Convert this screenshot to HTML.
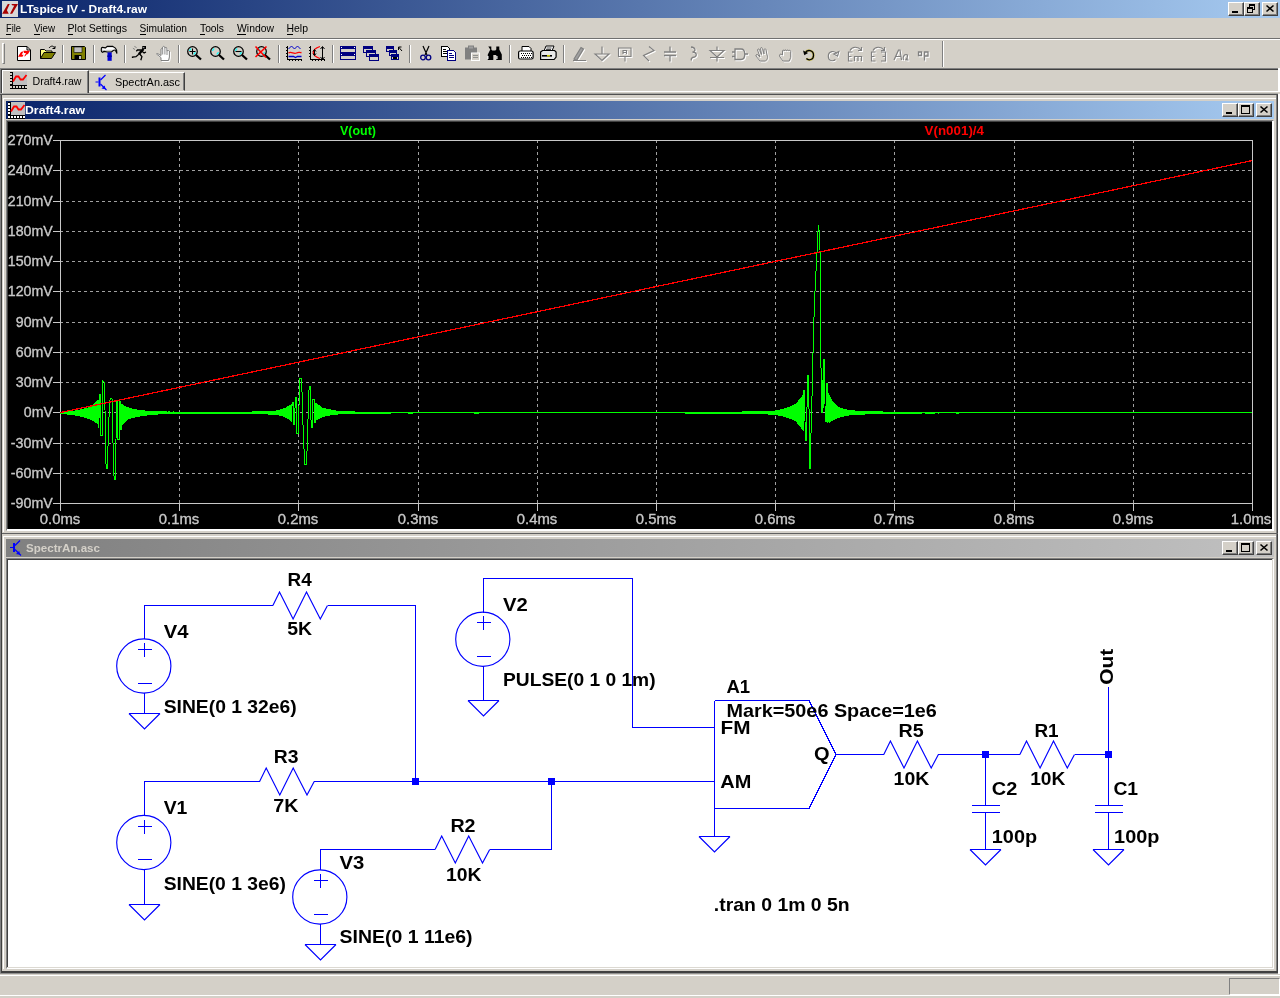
<!DOCTYPE html>
<html><head><meta charset="utf-8"><title>LTspice IV - Draft4.raw</title>
<style>
html,body{margin:0;padding:0}
body{width:1280px;height:998px;background:#d4d0c8;position:relative;overflow:hidden;font-family:"Liberation Sans",sans-serif;font-size:11px}
div{position:absolute;box-sizing:border-box}
svg{position:absolute;left:0;top:0;font-family:"Liberation Sans",sans-serif;will-change:transform}
.grad{background:linear-gradient(to right,#0a246a,#a6caf0)}
.gradi{background:linear-gradient(to right,#808080,#c0c0c0)}
.btn{width:16px;height:14px;background:#d4d0c8;border:1px solid;border-color:#fff #404040 #404040 #fff;box-shadow:inset -1px -1px 0 #808080}
.sep{width:2px;height:18px;top:45px;border-left:1px solid #808080;border-right:1px solid #fff}
.hl{height:1px;left:0;width:1280px}
</style></head><body>
<div class="grad" id="titlebar" style="left:0;top:0;width:1280px;height:18px"></div>
<div class="btn" style="left:1228px;top:2px"></div>
<div class="btn" style="left:1244px;top:2px"></div>
<div class="btn" style="left:1262px;top:2px"></div>
<div class="hl" style="top:38px;background:#707070"></div>
<div class="hl" style="top:39px;background:#fff"></div>
<div style="left:2px;top:43px;width:3px;height:21px;border:1px solid;border-color:#fff #808080 #808080 #fff"></div>
<div class="sep" style="left:62px"></div>
<div class="sep" style="left:93px"></div>
<div class="sep" style="left:124px"></div>
<div class="sep" style="left:178px"></div>
<div class="sep" style="left:278px"></div>
<div class="sep" style="left:332px"></div>
<div class="sep" style="left:409px"></div>
<div class="sep" style="left:509px"></div>
<div class="sep" style="left:563px"></div>
<div style="left:942px;top:41px;width:2px;height:26px;border-left:1px solid #808080;border-right:1px solid #fff"></div>
<div class="hl" style="top:68px;background:#808080;width:1278px"></div>
<div class="hl" style="top:69px;background:#404040;width:1277px;left:1px"></div>
<div style="left:0;top:68px;width:1px;height:26px;background:#808080"></div>
<div style="left:1px;top:69px;width:1px;height:25px;background:#404040"></div>
<div class="hl" style="top:91px;background:#fff;left:2px;width:1278px"></div>
<div style="left:1278px;top:68px;width:2px;height:24px;background:#fff"></div>
<div id="tab1" style="left:2px;top:70px;width:87px;height:24px;background:#d4d0c8;border:1px solid;border-color:#fff #404040 #d4d0c8 #fff;border-bottom:none;box-shadow:inset -1px 0 0 #808080"></div>
<div id="tab2" style="left:89px;top:72px;width:96px;height:19px;border:1px solid;border-color:#fff #404040 #d4d0c8 #d4d0c8;box-shadow:inset -1px 0 0 #808080"></div>
<div style="left:0px;top:94px;width:1px;height:880px;background:#808080"></div>
<div style="left:1px;top:94px;width:1px;height:880px;background:#404040"></div>
<div style="left:1278px;top:94px;width:1px;height:880px;background:#fff"></div>
<div style="left:1279px;top:94px;width:1px;height:880px;background:#fff"></div>
<div style="left:0px;top:93px;width:1278px;height:1px;background:#a8a8a4"></div>
<div style="left:0px;top:94px;width:1278px;height:1px;background:#505050"></div>
<div id="win1" style="left:2px;top:95px;width:1276px;height:439px;background:#d4d0c8"></div>
<div style="left:3px;top:98px;width:1273px;height:1px;background:#fff"></div>
<div style="left:3px;top:98px;width:1px;height:434px;background:#fff"></div>
<div style="left:1276px;top:95px;width:1px;height:439px;background:#808080"></div>
<div style="left:1277px;top:95px;width:1px;height:439px;background:#404040"></div>
<div style="left:2px;top:533px;width:1276px;height:1px;background:#606060"></div>
<div class="grad" id="cap1" style="left:6px;top:101px;width:1268px;height:18px"></div>
<div class="btn" style="left:1222px;top:103px"></div>
<div class="btn" style="left:1238px;top:103px"></div>
<div class="btn" style="left:1256px;top:103px"></div>
<div id="plot" style="left:6px;top:120px;width:1268px;height:411px;background:#fff;border:1px solid;border-color:#808080 #fff #fff #808080"></div>
<div style="left:7px;top:121px;width:1265px;height:408px;background:#000;border-left:1px solid #404040;border-top:1px solid #404040"></div>
<div id="win2" style="left:2px;top:534px;width:1276px;height:437px;background:#d4d0c8"></div>
<div style="left:3px;top:536px;width:1273px;height:1px;background:#fff"></div>
<div style="left:3px;top:536px;width:1px;height:433px;background:#fff"></div>
<div style="left:1276px;top:534px;width:1px;height:439px;background:#808080"></div>
<div style="left:1277px;top:534px;width:1px;height:439px;background:#404040"></div>
<div style="left:2px;top:971px;width:1276px;height:1px;background:#404040"></div>
<div style="left:2px;top:972px;width:1276px;height:1px;background:#404040"></div>
<div style="left:0px;top:973px;width:1278px;height:1px;background:#909090"></div>
<div class="gradi" id="cap2" style="left:6px;top:539px;width:1268px;height:18px"></div>
<div class="btn" style="left:1222px;top:541px"></div>
<div class="btn" style="left:1238px;top:541px"></div>
<div class="btn" style="left:1256px;top:541px"></div>
<div id="sch" style="left:6px;top:558px;width:1268px;height:411px;background:#dcd9d2;border:1px solid;border-color:#808080 #fff #fff #808080"></div>
<div style="left:7px;top:559px;width:1265px;height:408px;background:#fff;border-left:1px solid #404040;border-top:1px solid #404040"></div>
<div style="left:0px;top:975px;width:1280px;height:1px;background:#fff"></div>
<div style="left:0px;top:995px;width:1280px;height:1px;background:#fff"></div>
<div style="left:1229px;top:978px;width:51px;height:17px;border:1px solid;border-color:#808080 #fff #fff #808080"></div>
<svg id="ui" width="1280" height="998" viewBox="0 0 1280 998">
<g transform="translate(2,1)"><rect width="16" height="16" fill="#d8d8d8"/><path d="M5.8 2.900H7.700L4.900 9.300L6.750 12.700H0.200Z" fill="#a80000"/><path d="M9.250 2.900H16L10.200 12.700H8L12.300 4.600H10.600Z" fill="#a80000"/></g>
<text x="20.0" y="13.0" font-size="11" fill="#fff" font-weight="bold" textLength="127.0" lengthAdjust="spacingAndGlyphs">LTspice IV - Draft4.raw</text>
<text x="6.0" y="32.0" font-size="11" fill="#000" textLength="15.0" lengthAdjust="spacingAndGlyphs">File</text>
<text x="34.0" y="32.0" font-size="11" fill="#000" textLength="21.0" lengthAdjust="spacingAndGlyphs">View</text>
<text x="67.5" y="32.0" font-size="11" fill="#000" textLength="59.5" lengthAdjust="spacingAndGlyphs">Plot Settings</text>
<text x="139.5" y="32.0" font-size="11" fill="#000" textLength="47.5" lengthAdjust="spacingAndGlyphs">Simulation</text>
<text x="200.0" y="32.0" font-size="11" fill="#000" textLength="24.0" lengthAdjust="spacingAndGlyphs">Tools</text>
<text x="237.0" y="32.0" font-size="11" fill="#000" textLength="37.0" lengthAdjust="spacingAndGlyphs">Window</text>
<text x="286.5" y="32.0" font-size="11" fill="#000" textLength="21.5" lengthAdjust="spacingAndGlyphs">Help</text>
<rect x="6" y="34" width="5" height="1" fill="#000"/>
<rect x="34" y="34" width="6" height="1" fill="#000"/>
<rect x="68" y="34" width="5" height="1" fill="#000"/>
<rect x="140" y="34" width="6" height="1" fill="#000"/>
<rect x="200" y="34" width="5" height="1" fill="#000"/>
<rect x="237" y="34" width="9" height="1" fill="#000"/>
<rect x="287" y="34" width="6" height="1" fill="#000"/>
<rect x="1232" y="11" width="6" height="2" fill="#000"/>
<path d="M1249 4h6v6h-6z M1250 6v3h4v-3z" fill="#000" fill-rule="evenodd"/><path d="M1247 7h6v6h-6z M1248 9v3h4v-3z" fill="#000" fill-rule="evenodd"/><rect x="1248" y="9" width="4" height="3" fill="#d4d0c8"/>
<path d="M1266.5 5.5l7 6M1273.5 5.5l-7 6" stroke="#000" stroke-width="1.6" fill="none"/>
<rect x="1226" y="112" width="6" height="2" fill="#000"/>
<path d="M1241 105h9v9h-9z M1242 107v6h7v-6z" fill="#000" fill-rule="evenodd"/>
<path d="M1260.5 106.5l7 6M1267.5 106.5l-7 6" stroke="#000" stroke-width="1.6" fill="none"/>
<rect x="1226" y="550" width="6" height="2" fill="#000"/>
<path d="M1241 543h9v9h-9z M1242 545v6h7v-6z" fill="#000" fill-rule="evenodd"/>
<path d="M1260.5 544.5l7 6M1267.5 544.5l-7 6" stroke="#000" stroke-width="1.6" fill="none"/>
<g transform="translate(10,72)" shape-rendering="crispEdges"><rect x="0" y="0" width="3" height="17" fill="#000"/><rect x="0" y="13" width="17" height="4" fill="#000"/><rect x="3" y="0" width="14" height="13" fill="#c0c0c0"/><rect x="0" y="1" width="2" height="2" fill="#d4d0c8"/><rect x="0" y="4" width="2" height="2" fill="#d4d0c8"/><rect x="0" y="7" width="2" height="2" fill="#d4d0c8"/><rect x="0" y="10" width="2" height="2" fill="#d4d0c8"/><rect x="0" y="14" width="2" height="2" fill="#d4d0c8"/><rect x="3" y="14" width="2" height="2" fill="#d4d0c8"/><rect x="6" y="14" width="2" height="2" fill="#d4d0c8"/><rect x="9" y="14" width="2" height="2" fill="#d4d0c8"/><rect x="12" y="14" width="2" height="2" fill="#d4d0c8"/><rect x="15" y="14" width="2" height="2" fill="#d4d0c8"/></g><path d="M13 81.5L16 76.5H18.5L20.5 79.5H23L26.5 75" stroke="#f00" stroke-width="1.8" fill="none"/>
<text x="32.5" y="85.0" font-size="11" fill="#000" textLength="49.0" lengthAdjust="spacingAndGlyphs">Draft4.raw</text>
<g transform="translate(95.5,74.5)" stroke="#00f" fill="none"><path d="M0 7.5h3" stroke-width="1"/><rect x="3" y="3" width="2" height="9" fill="#00f" stroke="none"/><path d="M5 5.5L10 .5M5 9.500L11 15.500" stroke-width="1.2"/><path d="M10 14.800l-4-.8 3.200-3z" fill="#00f" stroke="none"/></g>
<text x="115.0" y="86.0" font-size="11" fill="#000" textLength="65.0" lengthAdjust="spacingAndGlyphs">SpectrAn.asc</text>
<g transform="translate(8,102)" shape-rendering="crispEdges"><rect x="0" y="0" width="3" height="17" fill="#000"/><rect x="0" y="13" width="17" height="4" fill="#000"/><rect x="3" y="0" width="14" height="13" fill="#c0c0c0"/><rect x="0" y="1" width="2" height="2" fill="#fff"/><rect x="0" y="4" width="2" height="2" fill="#fff"/><rect x="0" y="7" width="2" height="2" fill="#fff"/><rect x="0" y="10" width="2" height="2" fill="#fff"/><rect x="0" y="14" width="2" height="2" fill="#fff"/><rect x="3" y="14" width="2" height="2" fill="#fff"/><rect x="6" y="14" width="2" height="2" fill="#fff"/><rect x="9" y="14" width="2" height="2" fill="#fff"/><rect x="12" y="14" width="2" height="2" fill="#fff"/><rect x="15" y="14" width="2" height="2" fill="#fff"/></g><path d="M11 111.5L14 106.5H16.5L18.5 109.5H21L24.5 105" stroke="#f00" stroke-width="1.8" fill="none"/>
<text x="25.0" y="114.0" font-size="11" fill="#fff" font-weight="bold" textLength="60.0" lengthAdjust="spacingAndGlyphs">Draft4.raw</text>
<g transform="translate(10,540)" stroke="#00f" fill="none"><path d="M0 7.5h3" stroke-width="1"/><rect x="3" y="3" width="2" height="9" fill="#00f" stroke="none"/><path d="M5 5.5L10 .5M5 9.500L11 15.500" stroke-width="1.2"/><path d="M10 14.800l-4-.8 3.200-3z" fill="#00f" stroke="none"/></g>
<text x="26.0" y="552.0" font-size="11" fill="#d4d0c8" font-weight="bold" textLength="74.0" lengthAdjust="spacingAndGlyphs">SpectrAn.asc</text>
<g transform="translate(17,45)"><path d="M0.5 1.5h9.5l3.5 3.5v10.500h-13z" fill="#fff" stroke="#000"/><path d="M10 1.5v3.5h3.500" fill="none" stroke="#000"/><path d="M1 11.800L4 7L6.500 6.200L4.700 9.700H6.500L5.500 11.800Z" fill="#f00"/><path d="M6.500 5.800H13L11 9L9.200 9.700L8.500 11L7.200 11.500L9 8H7Z" fill="#f00"/></g>
<g transform="translate(40,45)"><path d="M0.5 13.5v-9h4l1.5 1.5h6v2" fill="#ffff80" stroke="#000"/><path d="M0.5 13.5l3.5-6h11.5l-4 6z" fill="#808000" stroke="#000"/><path d="M9 3c2-2.5 4.5-2.5 5.5 0m0.500-2v2.5h-2.5" fill="none" stroke="#000"/></g>
<g transform="translate(71,45)"><path d="M0.5 1.5h13l1 1v12h-14z" fill="#808000" stroke="#000"/><rect x="3" y="2" width="8" height="5.5" fill="#c0c0c0" stroke="#000" stroke-width=".6"/><rect x="3.5" y="10" width="7" height="4.5" fill="#000"/><rect x="8" y="11" width="2" height="3" fill="#c0c0c0"/></g>
<g transform="translate(101,45)"><path d="M0.300 3.900Q.4 2.300 1.400 2.300L4.400 2.900L6.250 1.400H11.900Q15 2.500 15.600 5.100L15.900 8.600L15 6.400Q14 5 13.100 4.800L10.500 7H6.250L3.100 6.400L1.400 7.300Q.3 7 .3 5.750Z" fill="#c8c8c8" stroke="#000" stroke-width="1.1"/><path d="M1.300 3.800L4.400 4L6.500 2.600H11.500Q13.300 3.300 14 4.600L10 4.800H6L3.500 5L1.300 4.800Z" fill="#fff"/><rect x="6.500" y="7.400" width="4.200" height="8.400" fill="#0000d8"/><rect x="6.200" y="10.500" width="4.800" height="1.300" fill="#0000a0"/></g>
<g transform="translate(132,45)"><rect x="10.300" y="1" width="3.700" height="3" fill="#000"/><rect x="11.300" y="2.200" width="1" height="1" fill="#fff"/><path d="M11.500 3.900L6.800 9.300" stroke="#000" stroke-width="2.400" fill="none"/><path d="M9.500 5H5.500L4.300 6.300M10 6.300L12.100 7.900L14 7M6.800 9.300L4 11.700L.5 12V13M7.750 9L9.900 11.700L8.800 15.200" stroke="#000" stroke-width="1.300" fill="none"/><path d="M.9 3.250L3 4.500M2.400 1.400L4.600 2.600" stroke="#707070" stroke-width=".8"/></g>
<g transform="translate(156,45)"><path d="M5 15.500V12.600L.8 9.300Q.3 8.300 1.500 8.500L5 10.500V4Q5.750 2.800 6.600 4V2Q7.800 .6 8.800 2V3Q9.900 1.600 10.900 3V6Q12.400 4.600 13.400 6V12L12.500 15.500Z" transform="translate(1,1)" stroke="#fff" stroke-width="1" fill="none"/><path d="M5 15.500V12.600L.8 9.300Q.3 8.300 1.500 8.500L5 10.500V4Q5.750 2.800 6.600 4V2Q7.800 .6 8.800 2V3Q9.900 1.600 10.900 3V6Q12.400 4.600 13.400 6V12L12.500 15.500Z" stroke="#808080" stroke-width="1" fill="#fff"/><path d="M6.700 4V9.500M8.900 3V9.500M11 6V10" stroke="#808080" stroke-width=".9" fill="none"/></g>
<g transform="translate(187,45)"><circle cx="5.500" cy="6.500" r="4.800" fill="none" stroke="#000" stroke-width="1.250"/><path d="M2.600 6a3.200 3.200 0 0 1 1.600-2.400M8.400 7.200a3.200 3.200 0 0 1-1.700 2.200" stroke="#0ff" stroke-width="1.200" fill="none"/><path d="M9 10L14 14.500" stroke="#000" stroke-width="2.300"/><path d="M2.500 6.500h6M5.500 3.500v6" stroke="#000" stroke-width="1.100"/></g>
<g transform="translate(210,45)"><circle cx="5.500" cy="6.500" r="4.800" fill="none" stroke="#000" stroke-width="1.250"/><path d="M2.600 6a3.200 3.200 0 0 1 1.600-2.400M8.400 7.200a3.200 3.200 0 0 1-1.700 2.200" stroke="#0ff" stroke-width="1.200" fill="none"/><path d="M9 10L14 14.500" stroke="#000" stroke-width="2.300"/></g>
<g transform="translate(233,45)"><circle cx="5.500" cy="6.500" r="4.800" fill="none" stroke="#000" stroke-width="1.250"/><path d="M2.600 6a3.200 3.200 0 0 1 1.600-2.400M8.400 7.200a3.200 3.200 0 0 1-1.700 2.200" stroke="#0ff" stroke-width="1.200" fill="none"/><path d="M9 10L14 14.500" stroke="#000" stroke-width="2.300"/><path d="M2.500 6.500h6" stroke="#000" stroke-width="1.100"/></g>
<g transform="translate(256,45)"><circle cx="5.500" cy="6.500" r="4.800" fill="none" stroke="#000" stroke-width="1.250"/><path d="M2.600 6a3.200 3.200 0 0 1 1.600-2.400M8.400 7.200a3.200 3.200 0 0 1-1.700 2.200" stroke="#0ff" stroke-width="1.200" fill="none"/><path d="M9 10L14 14.500" stroke="#000" stroke-width="2.300"/><path d="M-.5 1.500l10.500 11M10.500 1.500l-11 10.500" stroke="#f00" stroke-width="1.600"/></g>
<g transform="translate(286,45)"><path d="M1.5 1v13.500h14.500" stroke="#000" fill="none" shape-rendering="crispEdges"/><path d="M0 2.5h1M0 5.5h1M0 8.5h1M0 11.5h1M3 15.5h13" stroke="#000" fill="none" stroke-dasharray="1 2" shape-rendering="crispEdges"/><path d="M2.5 4l3-3 3 3 3-3 3 3" stroke="#00c" fill="none"/><path d="M2.5 8c3-2 5 1.5 8 0s3 0 5-.5" stroke="#f00" fill="none" stroke-width="1.3"/><path d="M2.5 11.5h5l2 1 2-1h4" stroke="#00c" fill="none" stroke-width="1.3"/></g>
<g transform="translate(309,45)"><path d="M1.5 1v13.500h14.500" stroke="#000" fill="none" shape-rendering="crispEdges"/><path d="M0 2.5h1M0 5.5h1M0 8.5h1M0 11.5h1M3 15.5h13" stroke="#000" fill="none" stroke-dasharray="1 2" shape-rendering="crispEdges"/><path d="M11 1.5c-9 3-9 9 0 12" stroke="#f00" fill="none" stroke-width="1.2"/><path d="M13.5 2v12M11.5 4l2-2.500 2 2.500M11.5 12l2 2.500 2-2.500M5.5 5v5M4 6.5l1.5-2 1.5 2M4 8.5l1.5 2 1.5-2" stroke="#000" fill="none"/></g>
<g transform="translate(340,45)"><g shape-rendering="crispEdges"><rect x=".5" y="1.5" width="15" height="6" fill="#d4d0c8" stroke="#000080"/><rect x="0" y="1" width="16" height="3" fill="#000080"/><rect x=".5" y="8.5" width="15" height="6" fill="#d4d0c8" stroke="#000080"/><rect x="0" y="8" width="16" height="3" fill="#000080"/><rect x="1" y="2" width="1" height="1" fill="#fff"/><rect x="14" y="2" width="1" height="1" fill="#fff"/><rect x="1" y="9" width="1" height="1" fill="#fff"/><rect x="14" y="9" width="1" height="1" fill="#fff"/></g></g>
<g transform="translate(363,45)"><g shape-rendering="crispEdges"><rect x="0.5" y="1.5" width="9" height="6" fill="#d4d0c8" stroke="#000080"/><rect x="0" y="1" width="10" height="3" fill="#000080"/><rect x="3.5" y="5.5" width="9" height="6" fill="#d4d0c8" stroke="#000080"/><rect x="3" y="5" width="10" height="3" fill="#000080"/><rect x="6.5" y="9.5" width="9" height="6" fill="#d4d0c8" stroke="#000080"/><rect x="6" y="9" width="10" height="3" fill="#000080"/></g></g>
<g transform="translate(386,45)"><g shape-rendering="crispEdges"><rect x="0.5" y="1.5" width="7" height="5" fill="#d4d0c8" stroke="#000080"/><rect x="0" y="1" width="8" height="3" fill="#000080"/><rect x="3.5" y="5.5" width="7" height="5" fill="#d4d0c8" stroke="#000080"/><rect x="3" y="5" width="8" height="3" fill="#000080"/><rect x="5.5" y="9.5" width="7" height="5" fill="#d4d0c8" stroke="#000080"/><rect x="5" y="9" width="8" height="3" fill="#000080"/><rect x="7" y="12" width="4" height="2" fill="#000"/></g><path d="M16 6l-3.500-4M12.5 5v-3h3" stroke="#000" fill="none"/></g>
<g transform="translate(420,45)"><path d="M3 1l4 9M9 1l-4 9" stroke="#000" stroke-width="1.2"/><circle cx="3" cy="12.5" r="2.3" fill="none" stroke="#000080" stroke-width="1.3"/><circle cx="8.5" cy="12.5" r="2.3" fill="none" stroke="#000080" stroke-width="1.3"/></g>
<g transform="translate(441,45)"><g shape-rendering="crispEdges"><path d="M.5 1.5h6l2 2v8h-8z" fill="#fff" stroke="#000"/><path d="M2 4.5h3M2 6.5h5M2 8.5h5" stroke="#000"/><path d="M6.5 5.5h6l2 2v7.500h-8z" fill="#fff" stroke="#000080"/><path d="M8 8.5h3M8 10.5h5M8 12.5h5" stroke="#000080"/></g></g>
<g transform="translate(464,45)"><rect x="1" y="2.5" width="12" height="12" fill="#808080"/><rect x="4.5" y="1" width="5" height="3" fill="#a0a0a0" stroke="#808080"/><rect x="7.5" y="8" width="8" height="7.5" fill="#d4d0c8" stroke="#fff"/><path d="M9 10.5h5M9 12.5h5" stroke="#808080" stroke-width=".8"/></g>
<g transform="translate(485.8,45)"><path d="M2.5 1.5h3v3l1 1h3l1-1v-3h3v3l2.500 5v5.500h-5.500v-5h-3v5h-5.500v-5.500l2.500-5z" fill="#000"/><rect x="1.5" y="11" width="1.2" height="3" fill="#fff"/><rect x="10.5" y="11" width="1.2" height="3" fill="#fff"/></g>
<g transform="translate(518,45)"><path d="M4 6v-4.500h7l2 2v2.500" fill="#fff" stroke="#000"/><rect x=".6" y="6" width="14.5" height="8" rx="1.5" fill="#fff" stroke="#000" stroke-width="1.2"/><path d="M2.5 8.5h11M3.5 10.5h10M2.5 12.5h11" stroke="#000" stroke-dasharray="1 1" shape-rendering="crispEdges"/></g>
<g transform="translate(540,45)"><path d="M4 6l2-5h8l-2 5" fill="#fff" stroke="#000"/><path d="M6.5 3h5M6 4.5h5" stroke="#000" stroke-width=".7"/><path d="M.6 7l2-1.500h12l1.5 1.500v5l-2 2.500h-13.500z" fill="#e8e8e8" stroke="#000" stroke-width="1.2"/><rect x="2" y="10" width="10" height="1.6" fill="#000"/><rect x="7" y="10.2" width="3" height="1.2" fill="#ff0"/></g>
<g transform="translate(572,46)"><path d="M1 14.5h13M2 13l7-11.500 2.500 1.500-7 11.500z" transform="translate(1,1)" stroke="#fff" stroke-width="1.2" fill="none"/><path d="M1 14.5h13M2 13l7-11.500 2.500 1.500-7 11.500z" stroke="#808080" stroke-width="1.2" fill="#a0a0a0"/></g>
<g transform="translate(594,46)"><path d="M8 .5v7.500M1 8h14l-7 6.500z" transform="translate(1,1)" stroke="#fff" stroke-width="1.2" fill="none"/><path d="M8 .5v7.500M1 8h14l-7 6.500z" stroke="#808080" stroke-width="1.2" fill="none"/></g>
<g transform="translate(617,46)"><path d="M1.5 2h12.500v8.500h-12.500zM8 10.500v5M6 8v-3.500h3.500v3.500M6 6.500h3.500" transform="translate(1,1)" stroke="#fff" stroke-width="1.1" fill="none"/><path d="M1.5 2h12.500v8.500h-12.500zM8 10.500v5M6 8v-3.500h3.500v3.500M6 6.500h3.500" stroke="#808080" stroke-width="1.1" fill="none"/></g>
<g transform="translate(641,46)"><path d="M8 .5l5 4-10.500 5 5.500 5.500" transform="translate(1,1)" stroke="#fff" stroke-width="1.2" fill="none"/><path d="M8 .5l5 4-10.500 5 5.500 5.500" stroke="#808080" stroke-width="1.2" fill="none"/></g>
<g transform="translate(663,46)"><path d="M7 .5v5.500M1 6h12M1 9.500h12M7 9.500v6" transform="translate(1,1)" stroke="#fff" stroke-width="1.3" fill="none"/><path d="M7 .5v5.500M1 6h12M1 9.500h12M7 9.500v6" stroke="#808080" stroke-width="1.3" fill="none"/></g>
<g transform="translate(687,46)"><path d="M4 1c5 .5 5 4.500 1.500 5c5 .5 5 5 0 5.500c-1.500 1-1.500 2-1 3" transform="translate(1,1)" stroke="#fff" stroke-width="1.3" fill="none"/><path d="M4 1c5 .5 5 4.500 1.500 5c5 .5 5 5 0 5.500c-1.500 1-1.500 2-1 3" stroke="#808080" stroke-width="1.3" fill="none"/></g>
<g transform="translate(709,46)"><path d="M8 .5v4M1 4.500h14l-7 6.500zM1 11.500h14M8 11.500v4" transform="translate(1,1)" stroke="#fff" stroke-width="1.2" fill="none"/><path d="M8 .5v4M1 4.500h14l-7 6.500zM1 11.500h14M8 11.500v4" stroke="#808080" stroke-width="1.2" fill="none"/></g>
<g transform="translate(732,46)"><path d="M0 6h3M0 10.500h3M3 3h6c5 0 5 10.500 0 10.500h-6zM13 8h3" transform="translate(1,1)" stroke="#fff" stroke-width="1.3" fill="none"/><path d="M0 6h3M0 10.500h3M3 3h6c5 0 5 10.500 0 10.500h-6zM13 8h3" stroke="#808080" stroke-width="1.3" fill="none"/></g>
<g transform="translate(755,46)"><path d="M5 15l-4-5c-.5-1.500 1-2 2-1l2 2-2.500-7c0-1 1.500-1.500 2-.5l2 5-1-6c0-1 1.500-1.500 2 0l1.500 5.500 0-4.500c.5-1 1.500-1 2 0l1 5.500c1.500 2.500 0 4.500-1.500 6z" transform="translate(1,1)" stroke="#fff" stroke-width="1" fill="none"/><path d="M5 15l-4-5c-.5-1.500 1-2 2-1l2 2-2.500-7c0-1 1.500-1.500 2-.5l2 5-1-6c0-1 1.500-1.500 2 0l1.500 5.500 0-4.500c.5-1 1.500-1 2 0l1 5.500c1.500 2.500 0 4.500-1.500 6z" stroke="#808080" stroke-width="1" fill="none"/></g>
<g transform="translate(779,46)"><path d="M4 15l-3-4c-1-1.500-.5-3 1-3l1.500 1v-4c0-1.200 1.600-1.200 1.800 0 0-1.500 2-1.500 2.200 0 0-1.300 2-1.300 2.200 0 .2-1 1.800-1 2 .3v6l-1.500 3.700z" transform="translate(1,1)" stroke="#fff" stroke-width="1" fill="none"/><path d="M4 15l-3-4c-1-1.500-.5-3 1-3l1.500 1v-4c0-1.200 1.600-1.200 1.800 0 0-1.500 2-1.500 2.200 0 0-1.300 2-1.300 2.200 0 .2-1 1.800-1 2 .3v6l-1.500 3.700z" stroke="#808080" stroke-width="1" fill="none"/></g>
<g transform="translate(801,45)"><g transform="translate(1.200,2.600) scale(.84)"><path d="M3.500 6.500c2.500-5 10-3.500 10 2.500s-6 6.500-8.500 4" stroke="#c8b400" stroke-width="2.800" fill="none" opacity=".5"/><path d="M3.500 6.500c2.500-5 10-3.500 10 2.500s-6 6.500-8.500 4" stroke="#000" stroke-width="1.500" fill="none"/><path d="M1 3.500l1.500 5.500 4.500-2.500z" fill="#000"/></g></g>
<g transform="translate(825,46)"><g transform="translate(1.200,2.600) scale(.84)"><path d="M12.500 6.500c-2.500-5-10-3.500-10 2.500s6 6.500 8.500 4M15 3.500l-1.500 5.500-4.500-2.500z" transform="translate(1,1)" stroke="#fff" stroke-width="1.4" fill="none"/><path d="M12.500 6.500c-2.500-5-10-3.500-10 2.500s6 6.500 8.500 4M15 3.500l-1.500 5.500-4.500-2.500z" stroke="#808080" stroke-width="1.4" fill="none"/></g></g>
<g transform="translate(847,46)"><path d="M5.500 6h-4v9h4M1.500 10.500h3M7.500 15v-4.500h7v4.500M11 10.500v4.500M3 4.500c2-4 8-4.500 11-.5M14.500 1v3.500h-3.500" transform="translate(1,1)" stroke="#fff" stroke-width="1.2" fill="none"/><path d="M5.500 6h-4v9h4M1.500 10.500h3M7.500 15v-4.500h7v4.500M11 10.500v4.500M3 4.500c2-4 8-4.500 11-.5M14.500 1v3.500h-3.500" stroke="#808080" stroke-width="1.2" fill="none"/></g>
<g transform="translate(870,46)"><path d="M5.500 6h-4v9h4M1.500 10.500h3M11 6h4.500v9h-4.500M15.500 10.500h-3M3 4.500c2-4 8-4.500 11-.5M14.500 1v3.500h-3.500" transform="translate(1,1)" stroke="#fff" stroke-width="1.2" fill="none"/><path d="M5.500 6h-4v9h4M1.500 10.500h3M11 6h4.500v9h-4.500M15.500 10.500h-3M3 4.500c2-4 8-4.500 11-.5M14.500 1v3.500h-3.500" stroke="#808080" stroke-width="1.2" fill="none"/></g>
<g transform="translate(893,46)"><path d="M1 14l4.500-10h1.500l1.500 10M3 10.500h5M10.500 14c-1-2 0-5.500 2.500-5.500s1.500 4-.5 5.500M14.500 8.500l-.5 5.500h1.500" transform="translate(1,1)" stroke="#fff" stroke-width="1.2" fill="none"/><path d="M1 14l4.500-10h1.500l1.500 10M3 10.500h5M10.500 14c-1-2 0-5.500 2.500-5.500s1.500 4-.5 5.500M14.500 8.500l-.5 5.500h1.500" stroke="#808080" stroke-width="1.2" fill="none"/></g>
<g transform="translate(917,46)"><path d="M1.500 6h3v3.500h-3zM7.500 14.500v-8.500h3.500v4h-3.500" transform="translate(1,1)" stroke="#fff" stroke-width="1.3" fill="none"/><path d="M1.500 6h3v3.500h-3zM7.500 14.500v-8.500h3.500v4h-3.500" stroke="#808080" stroke-width="1.3" fill="none"/></g>
</svg>
<svg id="plotsvg" width="1280" height="998" viewBox="0 0 1280 998">
<g shape-rendering="crispEdges" fill="none">
<path d="M60 170.5H1252M60 201.5H1252M60 231.5H1252M60 261.5H1252M60 291.5H1252M60 322.5H1252M60 352.5H1252M60 382.5H1252M60 412.5H1252M60 443.5H1252M60 473.5H1252" stroke="#a0a0a0" stroke-width="1" stroke-dasharray="3 3"/>
<path d="M179.5 140V503M298.5 140V503M418.5 140V503M537.5 140V503M656.5 140V503M775.5 140V503M894.5 140V503M1014.5 140V503M1133.5 140V503" stroke="#a0a0a0" stroke-width="1" stroke-dasharray="3 3"/>
<path d="M53 140.5H1252.5V511M53 503.5H1252M60.5 140V511M53 170.5H60M53 201.5H60M53 231.5H60M53 261.5H60M53 291.5H60M53 322.5H60M53 352.5H60M53 382.5H60M53 412.5H60M53 443.5H60M53 473.5H60M179.5 503V511M298.5 503V511M418.5 503V511M537.5 503V511M656.5 503V511M775.5 503V511M894.5 503V511M1014.5 503V511M1133.5 503V511" stroke="#c8c8c8" stroke-width="1"/>
</g>
<text x="7.8" y="145.0" font-size="14.3" fill="#c8c8c8" textLength="45.0" lengthAdjust="spacingAndGlyphs" stroke="#c8c8c8" stroke-width="0.35">270mV</text>
<text x="7.8" y="175.0" font-size="14.3" fill="#c8c8c8" textLength="45.0" lengthAdjust="spacingAndGlyphs" stroke="#c8c8c8" stroke-width="0.35">240mV</text>
<text x="7.8" y="206.0" font-size="14.3" fill="#c8c8c8" textLength="45.0" lengthAdjust="spacingAndGlyphs" stroke="#c8c8c8" stroke-width="0.35">210mV</text>
<text x="7.8" y="236.0" font-size="14.3" fill="#c8c8c8" textLength="45.0" lengthAdjust="spacingAndGlyphs" stroke="#c8c8c8" stroke-width="0.35">180mV</text>
<text x="7.8" y="266.0" font-size="14.3" fill="#c8c8c8" textLength="45.0" lengthAdjust="spacingAndGlyphs" stroke="#c8c8c8" stroke-width="0.35">150mV</text>
<text x="7.8" y="296.0" font-size="14.3" fill="#c8c8c8" textLength="45.0" lengthAdjust="spacingAndGlyphs" stroke="#c8c8c8" stroke-width="0.35">120mV</text>
<text x="15.8" y="327.0" font-size="14.3" fill="#c8c8c8" textLength="37.0" lengthAdjust="spacingAndGlyphs" stroke="#c8c8c8" stroke-width="0.35">90mV</text>
<text x="15.8" y="357.0" font-size="14.3" fill="#c8c8c8" textLength="37.0" lengthAdjust="spacingAndGlyphs" stroke="#c8c8c8" stroke-width="0.35">60mV</text>
<text x="15.8" y="387.0" font-size="14.3" fill="#c8c8c8" textLength="37.0" lengthAdjust="spacingAndGlyphs" stroke="#c8c8c8" stroke-width="0.35">30mV</text>
<text x="23.8" y="417.0" font-size="14.3" fill="#c8c8c8" textLength="29.0" lengthAdjust="spacingAndGlyphs" stroke="#c8c8c8" stroke-width="0.35">0mV</text>
<text x="10.8" y="448.0" font-size="14.3" fill="#c8c8c8" textLength="42.0" lengthAdjust="spacingAndGlyphs" stroke="#c8c8c8" stroke-width="0.35">-30mV</text>
<text x="10.8" y="478.0" font-size="14.3" fill="#c8c8c8" textLength="42.0" lengthAdjust="spacingAndGlyphs" stroke="#c8c8c8" stroke-width="0.35">-60mV</text>
<text x="10.8" y="508.0" font-size="14.3" fill="#c8c8c8" textLength="42.0" lengthAdjust="spacingAndGlyphs" stroke="#c8c8c8" stroke-width="0.35">-90mV</text>
<text x="39.8" y="524.0" font-size="14.3" fill="#c8c8c8" textLength="40.5" lengthAdjust="spacingAndGlyphs" stroke="#c8c8c8" stroke-width="0.35">0.0ms</text>
<text x="158.8" y="524.0" font-size="14.3" fill="#c8c8c8" textLength="40.5" lengthAdjust="spacingAndGlyphs" stroke="#c8c8c8" stroke-width="0.35">0.1ms</text>
<text x="277.8" y="524.0" font-size="14.3" fill="#c8c8c8" textLength="40.5" lengthAdjust="spacingAndGlyphs" stroke="#c8c8c8" stroke-width="0.35">0.2ms</text>
<text x="397.8" y="524.0" font-size="14.3" fill="#c8c8c8" textLength="40.5" lengthAdjust="spacingAndGlyphs" stroke="#c8c8c8" stroke-width="0.35">0.3ms</text>
<text x="516.8" y="524.0" font-size="14.3" fill="#c8c8c8" textLength="40.5" lengthAdjust="spacingAndGlyphs" stroke="#c8c8c8" stroke-width="0.35">0.4ms</text>
<text x="635.8" y="524.0" font-size="14.3" fill="#c8c8c8" textLength="40.5" lengthAdjust="spacingAndGlyphs" stroke="#c8c8c8" stroke-width="0.35">0.5ms</text>
<text x="754.8" y="524.0" font-size="14.3" fill="#c8c8c8" textLength="40.5" lengthAdjust="spacingAndGlyphs" stroke="#c8c8c8" stroke-width="0.35">0.6ms</text>
<text x="873.8" y="524.0" font-size="14.3" fill="#c8c8c8" textLength="40.5" lengthAdjust="spacingAndGlyphs" stroke="#c8c8c8" stroke-width="0.35">0.7ms</text>
<text x="993.8" y="524.0" font-size="14.3" fill="#c8c8c8" textLength="40.5" lengthAdjust="spacingAndGlyphs" stroke="#c8c8c8" stroke-width="0.35">0.8ms</text>
<text x="1112.8" y="524.0" font-size="14.3" fill="#c8c8c8" textLength="40.5" lengthAdjust="spacingAndGlyphs" stroke="#c8c8c8" stroke-width="0.35">0.9ms</text>
<text x="1230.8" y="524.0" font-size="14.3" fill="#c8c8c8" textLength="40.5" lengthAdjust="spacingAndGlyphs" stroke="#c8c8c8" stroke-width="0.35">1.0ms</text>
<text x="340.0" y="135.0" font-size="13.3" fill="#00ff00" font-weight="bold" textLength="36.0" lengthAdjust="spacingAndGlyphs">V(out)</text>
<text x="924.5" y="135.0" font-size="13.3" fill="#ff0000" font-weight="bold" textLength="59.5" lengthAdjust="spacingAndGlyphs">V(n001)/4</text>
<g shape-rendering="crispEdges">
<polygon points="60.0,412.0 64.0,411.5 70.0,411.0 76.4,410.3 86.0,408.0 92.0,406.0 97.0,400.7 98.5,400.0 98.5,424.0 97.0,423.5 92.0,420.5 86.0,418.0 76.4,415.7 70.0,415.0 64.0,414.0 60.0,413.5" fill="#00ff00"/>
<polygon points="122.0,403.5 123.3,404.9 128.0,407.3 130.0,408.0 138.0,409.7 146.0,410.6 153.0,411.0 167.0,411.5 168.0,412.0 252.0,412.0 252.1,411.0 268.0,411.0 268.1,410.5 276.0,410.5 280.9,409.3 285.7,407.5 290.5,404.5 291.5,404.0 291.5,421.5 290.5,420.7 285.7,417.7 280.9,415.9 276.0,414.7 268.1,414.7 268.0,414.0 252.1,414.0 252.0,414.0 168.0,414.0 167.0,414.0 153.0,414.8 146.0,415.6 138.0,416.9 130.0,418.7 128.0,419.3 123.3,424.7 122.0,426.0" fill="#00ff00"/>
<polygon points="317.0,403.3 321.8,407.5 326.6,408.7 336.2,410.5 342.2,411.0 354.2,411.0 355.0,412.0 391.0,412.0 391.1,412.0 685.0,412.0 685.1,412.0 742.0,412.0 742.1,411.0 760.0,411.0 768.0,410.8 775.0,410.5 782.5,409.0 790.0,406.7 796.0,403.7 802.0,396.0 803.5,394.0 803.5,431.0 802.0,429.2 796.0,421.7 790.0,418.7 782.5,416.5 775.0,415.0 768.0,414.5 760.0,414.0 742.1,414.0 742.0,414.0 685.1,414.0 685.0,413.0 391.1,413.0 391.0,414.0 355.0,414.0 354.2,414.0 342.2,414.2 336.2,414.7 326.6,415.9 321.8,417.7 317.0,420.1" fill="#00ff00"/>
<polygon points="829.0,394.5 832.2,400.7 838.2,406.7 844.2,409.0 850.2,410.0 860.0,411.0 865.0,411.0 865.1,411.0 883.0,411.0 883.1,412.0 922.0,412.0 922.1,412.0 1252.0,412.0 1252.0,413.0 922.1,413.0 922.0,414.0 883.1,414.0 883.0,414.0 865.1,414.0 865.0,415.0 860.0,415.0 850.2,415.3 844.2,416.5 838.2,418.0 832.2,421.0 829.0,422.8" fill="#00ff00"/>
<path d="M98.5 412.0L98.9 427.7L99.3 394.0L100.6 394.0L100.9 435.5L102.1 435.5L102.6 381.0L104.3 382.0L105.0 410.0L105.7 455.0L106.2 468.6L107.6 468.6L108.3 430.0L109.3 412.0L110.1 398.9L112.0 398.9L112.6 425.0L113.6 468.0L114.2 479.7L115.4 479.7L116.0 440.0L116.5 401.9L117.5 401.9L118.0 439.7L119.3 439.7L119.7 401.9L120.6 401.9L121.0 429.0L121.6 429.0L122.0 404.0" stroke="#00ff00" stroke-width="1.0" fill="none" stroke-linejoin="miter"/>
<path d="M291.5 412.0L292.3 402.0L293.0 402.0L293.6 424.3L294.6 424.3L295.3 397.3L296.4 397.3L297.0 433.6L298.6 433.6L299.3 386.0L299.9 378.0L301.5 378.0L302.0 392.0L302.7 415.0L303.4 437.0L304.3 455.0L305.0 464.6L306.0 464.6L306.8 456.0L307.6 438.0L308.3 405.0L309.2 386.2L310.6 386.2L311.1 427.3L312.4 427.3L313.0 399.0L314.3 399.0L314.8 422.5L315.6 422.5L316.0 403.3L316.8 403.3L317.0 420.0" stroke="#00ff00" stroke-width="1.0" fill="none" stroke-linejoin="miter"/>
<path d="M803.5 412.0L804.0 390.0L804.7 390.0L805.2 440.5L806.6 440.5L807.4 375.1L808.7 375.1L809.3 440.0L809.7 468.3L810.4 468.3L811.1 428.0L812.3 386.0L813.4 335.0L814.5 303.0L815.6 278.0L816.6 260.0L817.6 242.0L818.2 227.0L818.7 225.2L819.2 232.0L819.8 232.0L820.4 282.0L820.7 365.0L821.5 372.0L821.7 412.4L823.0 412.4L823.3 359.3L824.5 359.3L825.2 421.7L826.2 421.7L826.6 383.4L827.3 383.4L827.8 422.5L828.5 393.2L829.0 422.0" stroke="#00ff00" stroke-width="1.0" fill="none" stroke-linejoin="miter"/>
<rect x="820.8" y="380" width="2.4" height="33" fill="#00ff00"/>
<rect x="408" y="412" width="5" height="2" fill="#00ff00"/>
<rect x="474" y="412" width="5" height="2" fill="#00ff00"/>
<rect x="925" y="412" width="10" height="2" fill="#00ff00"/>
<rect x="938" y="412" width="1" height="2" fill="#00ff00"/>
<rect x="956" y="412" width="3" height="2" fill="#00ff00"/>
<rect x="168" y="411" width="2" height="2" fill="#00ff00"/>
<rect x="173" y="411" width="1" height="2" fill="#00ff00"/>
<rect x="252" y="411" width="2" height="2" fill="#00ff00"/>
<path d="M60.5 412.5L1252.5 160.5" stroke="#ff0000" stroke-width="1.25" fill="none"/>
</g>
</svg>
<svg id="schsvg" width="1280" height="998" viewBox="0 0 1280 998">
<path d="M144.5 639V605.500H272.900M327.5 605.500H415.500V781.5M137.5 649.5h14M144.5 642.5v14M137.5 683.5h14M144.5 693V713.5M129.0 713.5h31M144.5 815.500V781.500H259.600M314.2 781.500H714.5M137.5 826.5h14M144.5 819.5v14M137.5 859.5h14M144.5 869.600V904.5M129.0 904.5h31M320.5 870V849.500H435.100M489.7 849.500H551.500V781.5M313.5 880.5h14M320.5 873.5v14M313.5 914.5h14M320.5 924V944.5M305.0 944.5h31M483.5 612.500V578.500H632.500V727.500H714.5M476.5 622.5h14M483.5 615.5v14M476.5 656.5h14M483.5 666V700.5M468.0 700.5h31M714.5 700.500H809L836 754.500L809 808.500H714.500V700.500M714.5 808.500V836.5M699.0 836.5h31M836 754.500H883.800M938.4 754.500H1019.900M1074.5 754.500H1108.5M985.5 754.500V805.5M972.0 805.5h28M972.0 812.5h28M985.5 812.500V849.5M970.0 849.5h31M1108.5 687V805.5M1095.0 805.5h28M1095.0 812.5h28M1108.5 812.500V849.5M1093.0 849.5h31" stroke="#0000ff" stroke-width="1" fill="none" shape-rendering="crispEdges"/>
<path d="M272.9 605.5L279.5 592.0L293.1 619.0L306.5 592.0L320.3 619.0L327.5 605.5M116.7 666a27.1 27.1 0 1 0 54.2 0a27.1 27.1 0 1 0 -54.2 0M129.0 713.5L144.5 729.0L160.0 713.5M259.6 781.5L266.2 768.0L279.8 795.0L293.2 768.0L307.0 795.0L314.2 781.5M116.7 842.5a27.1 27.1 0 1 0 54.2 0a27.1 27.1 0 1 0 -54.2 0M129.0 904.5L144.5 920.0L160.0 904.5M435.1 849.5L441.7 836.0L455.3 863.0L468.7 836.0L482.5 863.0L489.7 849.5M292.7 897a27.1 27.1 0 1 0 54.2 0a27.1 27.1 0 1 0 -54.2 0M305.0 944.5L320.5 960.0L336.0 944.5M455.7 639.2a27.1 27.1 0 1 0 54.2 0a27.1 27.1 0 1 0 -54.2 0M468.0 700.5L483.5 716.0L499.0 700.5M699.0 836.5L714.5 852.0L730.0 836.5M883.8 754.5L890.4 741.0L904.0 768.0L917.4 741.0L931.2 768.0L938.4 754.5M1019.9 754.5L1026.5 741.0L1040.1 768.0L1053.5 741.0L1067.3 768.0L1074.5 754.5M970.0 849.5L985.5 865.0L1001.0 849.5M1093.0 849.5L1108.5 865.0L1124.0 849.5" stroke="#0000ff" stroke-width="1.15" fill="none"/>
<rect x="412.0" y="778.0" width="7" height="7" fill="#0000ff"/>
<rect x="548.0" y="778.0" width="7" height="7" fill="#0000ff"/>
<rect x="982.0" y="751.0" width="7" height="7" fill="#0000ff"/>
<rect x="1105.0" y="751.0" width="7" height="7" fill="#0000ff"/>
<text x="287.5" y="586.3" font-size="18.6" fill="#000" font-weight="bold" textLength="24.2" lengthAdjust="spacingAndGlyphs">R4</text>
<text x="287.3" y="635.2" font-size="18.6" fill="#000" font-weight="bold" textLength="24.9" lengthAdjust="spacingAndGlyphs">5K</text>
<text x="163.7" y="638.4" font-size="18.6" fill="#000" font-weight="bold" textLength="24.7" lengthAdjust="spacingAndGlyphs">V4</text>
<text x="163.7" y="713.4" font-size="18.6" fill="#000" font-weight="bold" textLength="133.0" lengthAdjust="spacingAndGlyphs">SINE(0 1 32e6)</text>
<text x="273.7" y="763.3" font-size="18.6" fill="#000" font-weight="bold" textLength="24.7" lengthAdjust="spacingAndGlyphs">R3</text>
<text x="273.2" y="812.2" font-size="18.6" fill="#000" font-weight="bold" textLength="25.2" lengthAdjust="spacingAndGlyphs">7K</text>
<text x="163.7" y="814.4" font-size="18.6" fill="#000" font-weight="bold" textLength="23.7" lengthAdjust="spacingAndGlyphs">V1</text>
<text x="163.7" y="889.6" font-size="18.6" fill="#000" font-weight="bold" textLength="122.2" lengthAdjust="spacingAndGlyphs">SINE(0 1 3e6)</text>
<text x="339.6" y="869.1" font-size="18.6" fill="#000" font-weight="bold" textLength="24.8" lengthAdjust="spacingAndGlyphs">V3</text>
<text x="339.6" y="942.5" font-size="18.6" fill="#000" font-weight="bold" textLength="133.0" lengthAdjust="spacingAndGlyphs">SINE(0 1 11e6)</text>
<text x="450.4" y="831.5" font-size="18.6" fill="#000" font-weight="bold" textLength="25.2" lengthAdjust="spacingAndGlyphs">R2</text>
<text x="445.9" y="880.9" font-size="18.6" fill="#000" font-weight="bold" textLength="35.5" lengthAdjust="spacingAndGlyphs">10K</text>
<text x="503.0" y="611.4" font-size="18.6" fill="#000" font-weight="bold" textLength="24.8" lengthAdjust="spacingAndGlyphs">V2</text>
<text x="503.0" y="686.0" font-size="18.6" fill="#000" font-weight="bold" textLength="152.6" lengthAdjust="spacingAndGlyphs">PULSE(0 1 0 1m)</text>
<text x="726.4" y="692.8" font-size="18.6" fill="#000" font-weight="bold" textLength="23.7" lengthAdjust="spacingAndGlyphs">A1</text>
<text x="726.6" y="716.5" font-size="18.6" fill="#000" font-weight="bold" textLength="210.2" lengthAdjust="spacingAndGlyphs">Mark=50e6 Space=1e6</text>
<text x="720.5" y="733.6" font-size="18.6" fill="#000" font-weight="bold" textLength="30.0" lengthAdjust="spacingAndGlyphs">FM</text>
<text x="720.3" y="787.8" font-size="18.6" fill="#000" font-weight="bold" textLength="31.0" lengthAdjust="spacingAndGlyphs">AM</text>
<text x="814.0" y="760.0" font-size="18.6" fill="#000" font-weight="bold" textLength="15.6" lengthAdjust="spacingAndGlyphs">Q</text>
<text x="898.6" y="736.5" font-size="18.6" fill="#000" font-weight="bold" textLength="25.2" lengthAdjust="spacingAndGlyphs">R5</text>
<text x="893.6" y="785.4" font-size="18.6" fill="#000" font-weight="bold" textLength="35.7" lengthAdjust="spacingAndGlyphs">10K</text>
<text x="1034.4" y="736.5" font-size="18.6" fill="#000" font-weight="bold" textLength="24.2" lengthAdjust="spacingAndGlyphs">R1</text>
<text x="1030.2" y="785.4" font-size="18.6" fill="#000" font-weight="bold" textLength="35.2" lengthAdjust="spacingAndGlyphs">10K</text>
<text x="991.8" y="794.7" font-size="18.6" fill="#000" font-weight="bold" textLength="25.5" lengthAdjust="spacingAndGlyphs">C2</text>
<text x="991.8" y="842.5" font-size="18.6" fill="#000" font-weight="bold" textLength="45.3" lengthAdjust="spacingAndGlyphs">100p</text>
<text x="1113.4" y="794.7" font-size="18.6" fill="#000" font-weight="bold" textLength="24.7" lengthAdjust="spacingAndGlyphs">C1</text>
<text x="1114.1" y="842.5" font-size="18.6" fill="#000" font-weight="bold" textLength="45.3" lengthAdjust="spacingAndGlyphs">100p</text>
<text x="713.8" y="910.9" font-size="18.6" fill="#000" font-weight="bold" textLength="135.8" lengthAdjust="spacingAndGlyphs">.tran 0 1m 0 5n</text>
<text transform="translate(1113.3,684.8) rotate(-90)" font-size="18.6" font-weight="bold" fill="#000" textLength="36" lengthAdjust="spacingAndGlyphs">Out</text>
</svg>
</body></html>
